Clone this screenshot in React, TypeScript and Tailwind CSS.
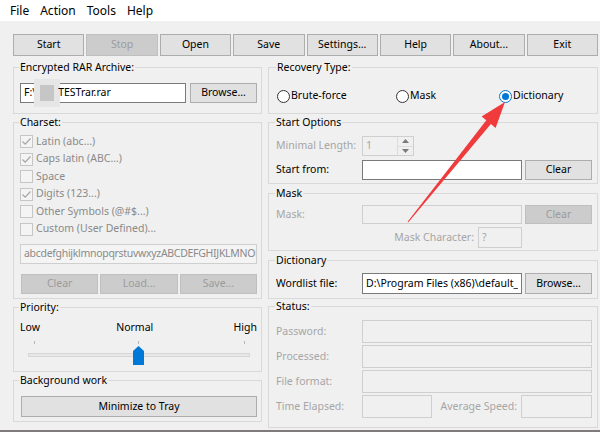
import React from 'react';

const btn = 'flex items-center justify-center border border-[#adadad] bg-[#e1e1e1] text-black';
const btnOff = 'flex items-center justify-center border border-[#bfbfbf] bg-[#cccccc] text-[#9b9b9b]';
const field = 'flex items-center border border-[#7a7a7a] bg-white px-[3px] text-black overflow-hidden whitespace-nowrap';
const fieldOff = 'flex items-center border border-[#cfcfcf] bg-[#f0f0f0] px-[3px] text-[#a6a6a6] overflow-hidden whitespace-nowrap';
const group = 'border border-[#d9d9d9] m-0 min-w-0';
const legend = 'leading-[14px] text-black px-[1px] -ml-[1px]';

function Check({ on, label }: { on?: boolean; label: string }) {
  return (
    <div className="flex h-[17.5px] items-center gap-[3px] text-[#8a8a8a]">
      <span className="flex h-[13px] w-[13px] items-center justify-center border border-[#c6c6c6] bg-[#f4f4f4]">
        {on && (
          <svg width="11" height="11" viewBox="0 0 11 11">
            <path d="M1.5 5.5 L4.2 8.2 L9.5 2.5" fill="none" stroke="#a5a5a5" strokeWidth="1.2" />
          </svg>
        )}
      </span>
      <span>{label}</span>
    </div>
  );
}

function Radio({ on, label }: { on?: boolean; label: string }) {
  return (
    <div className="flex items-center gap-[1px]">
      <span
        className={
          'flex h-[13px] w-[13px] items-center justify-center rounded-full border bg-white ' +
          (on ? 'border-[#0078d7]' : 'border-[#333333]')
        }
      >
        {on && <span className="h-[7px] w-[7px] rounded-full bg-[#0078d7]" />}
      </span>
      <span>{label}</span>
    </div>
  );
}

export default function App() {
  return (
    <div className="relative flex h-[432px] w-[600px] flex-col overflow-hidden bg-[#f0f0f0] font-['Noto_Sans',sans-serif] text-[10.5px] text-black">
      {/* Menu */}
      <div className="flex h-[21px] items-center gap-[11px] bg-white pl-[10px] text-[12px]">
        <span>File</span>
        <span>Action</span>
        <span>Tools</span>
        <span>Help</span>
      </div>

      {/* Toolbar */}
      <div className="mt-[13px] flex h-[22px] gap-[2px] pl-[13px] pr-[2px]">
        <div className={btn + ' flex-1'}>Start</div>
        <div className={btnOff + ' flex-1'}>Stop</div>
        <div className={btn + ' flex-1'}>Open</div>
        <div className={btn + ' flex-1'}>Save</div>
        <div className={btn + ' flex-1'}>Settings...</div>
        <div className={btn + ' flex-1'}>Help</div>
        <div className={btn + ' flex-1'}>About...</div>
        <div className={btn + ' flex-1'}>Exit</div>
      </div>

      <div className="flex gap-[6px] pl-[13px] pr-[2px]">
        {/* Left column */}
        <div className="flex w-[249px] flex-col">
          <fieldset className={group + ' mt-[4px] h-[54px] px-[6px] pr-[4px] pt-[9px]'}>
            <legend className={legend}>Encrypted RAR Archive:</legend>
            <div className="flex gap-[4px]">
              <div className={field + ' h-[20px] w-[166px] overflow-visible'}>
                <span>F:\</span>
                <span className="mx-[4px] h-[16px] w-[14px] bg-[#c6c6c6] shadow-[0_0_0_6px_#e6e6e6]" />
                <span>TESTrar.rar</span>
              </div>
              <div className={btn + ' h-[20px] flex-1'}>Browse...</div>
            </div>
          </fieldset>

          <fieldset className={group + ' mt-[1px] h-[184px] px-[6px] pr-[4px] pt-[4px]'}>
            <legend className={legend}>Charset:</legend>
            <Check on label="Latin (abc...)" />
            <Check on label="Caps latin (ABC...)" />
            <Check label="Space" />
            <Check on label="Digits (123...)" />
            <Check label="Other Symbols (@#$...)" />
            <Check label="Custom (User Defined)..." />
            <div className="mt-[6px] flex h-[20px] items-center overflow-hidden whitespace-nowrap border border-[#cfcfcf] bg-[#f4f4f4] px-[3px] tracking-[-0.3px] text-[#8a8a8a]">
              abcdefghijklmnopqrstuvwxyzABCDEFGHIJKLMNOPQRSTUVWXYZ
            </div>
            <div className="mt-[10px] flex gap-[2px] pl-[1px]">
              <div className={btnOff + ' h-[20px] flex-1'}>Clear</div>
              <div className={btnOff + ' h-[20px] flex-1'}>Load...</div>
              <div className={btnOff + ' h-[20px] flex-1'}>Save...</div>
            </div>
          </fieldset>

          <fieldset className={group + ' mt-[1px] h-[72px] px-[6px] pr-[4px] pt-[6px]'}>
            <legend className={legend}>Priority:</legend>
            <div className="flex h-[14px] items-center justify-between leading-[14px]">
              <span>Low</span>
              <span className="-ml-[4px]">Normal</span>
              <span>High</span>
            </div>
            <div className="relative h-[32px] pt-[19px]">
              <span className="absolute left-[14px] top-[7px] h-[3px] w-px bg-[#b5b5b5]" />
              <span className="absolute left-[118px] top-[7px] h-[3px] w-px bg-[#b5b5b5]" />
              <span className="absolute left-[224px] top-[7px] h-[3px] w-px bg-[#b5b5b5]" />
              <div className="ml-[8px] mr-[7px] h-[4px] border border-[#d6d6d6] bg-[#e7e7e7]" />
              <svg className="absolute left-[113px] top-[12px]" width="11" height="19" viewBox="0 0 11 19">
                <polygon points="0,5 5.5,0 11,5 11,19 0,19" fill="#0078d7" />
              </svg>
            </div>
          </fieldset>

          <fieldset className={group + ' mt-[1px] h-[49px] px-[6px] pr-[4px] pt-[9px]'}>
            <legend className={legend}>Background work</legend>
            <div className={btn + ' ml-[1px] h-[21px]'}>Minimize to Tray</div>
          </fieldset>
        </div>

        {/* Right column */}
        <div className="flex w-[330px] flex-col">
          <fieldset className={group + ' mt-[4px] h-[54px] pl-[8px] pt-[15px]'}>
            <legend className={legend}>Recovery Type:</legend>
            <div className="flex h-[14px] items-center">
              <div className="w-[119px]">
                <Radio label="Brute-force" />
              </div>
              <div className="w-[103px]">
                <Radio label="Mask" />
              </div>
              <Radio on label="Dictionary" />
            </div>
          </fieldset>

          <fieldset className={group + ' mt-[1px] h-[69px] pl-[7px] pr-[5px] pt-[7px]'}>
            <legend className={legend}>Start Options</legend>
            <div className="flex h-[20px] items-center">
              <span className="w-[86px] text-[#a6a6a6]">Minimal Length:</span>
              <div className="flex h-[20px] w-[52px] border border-[#cfcfcf] bg-[#f0f0f0]">
                <span className="flex flex-1 items-center px-[3px] text-[#a6a6a6]">1</span>
                <div className="flex w-[16px] flex-col border-l border-[#dcdcdc]">
                  <span className="flex flex-1 items-center justify-center border-b border-[#dcdcdc]">
                    <svg width="7" height="4" viewBox="0 0 7 4">
                      <polygon points="0,4 3.5,0 7,4" fill="#7a7a7a" />
                    </svg>
                  </span>
                  <span className="flex flex-1 items-center justify-center">
                    <svg width="7" height="4" viewBox="0 0 7 4">
                      <polygon points="0,0 3.5,4 7,0" fill="#7a7a7a" />
                    </svg>
                  </span>
                </div>
              </div>
            </div>
            <div className="mt-[4px] flex h-[20px] items-center">
              <span className="w-[86px]">Start from:</span>
              <div className={field + ' h-[20px] w-[160px]'} />
              <div className={btn + ' ml-[3px] h-[20px] flex-1'}>Clear</div>
            </div>
          </fieldset>

          <fieldset className={group + ' mt-[2px] h-[65px] pl-[7px] pr-[5px] pt-[5px]'}>
            <legend className={legend}>Mask</legend>
            <div className="flex h-[19px] items-center">
              <span className="w-[86px] text-[#a6a6a6]">Mask:</span>
              <div className={fieldOff + ' h-[19px] w-[160px]'} />
              <div className={btnOff + ' ml-[3px] h-[19px] flex-1'}>Clear</div>
            </div>
            <div className="mt-[3px] flex h-[21px] items-center">
              <span className="w-[202px] pr-[4px] text-right text-[#a6a6a6]">Mask Character:</span>
              <div className={fieldOff + ' h-[21px] w-[44px]'}>?</div>
            </div>
          </fieldset>

          <fieldset className={group + ' mt-[2px] h-[46px] pl-[7px] pr-[5px] pt-[6px]'}>
            <legend className={legend}>Dictionary</legend>
            <div className="flex h-[21px] items-center">
              <span className="w-[86px]">Wordlist file:</span>
              <div className={field + ' h-[21px] w-[160px]'}>
                <span className="w-[152px] overflow-hidden">D:\Program Files (x86)\default_english.dic</span>
              </div>
              <div className={btn + ' ml-[3px] h-[21px] flex-1'}>Browse...</div>
            </div>
          </fieldset>

          <fieldset className={group + ' h-[129px] pl-[7px] pr-[5px] pt-[7px]'}>
            <legend className={legend}>Status:</legend>
            <div className="flex flex-col gap-[2px] text-[#a6a6a6]">
              <div className="flex h-[23px] items-center">
                <span className="w-[86px]">Password:</span>
                <div className={fieldOff + ' h-[23px] flex-1'} />
              </div>
              <div className="flex h-[23px] items-center">
                <span className="w-[86px]">Processed:</span>
                <div className={fieldOff + ' h-[23px] flex-1'} />
              </div>
              <div className="flex h-[23px] items-center">
                <span className="w-[86px]">File format:</span>
                <div className={fieldOff + ' h-[23px] flex-1'} />
              </div>
              <div className="flex h-[23px] items-center">
                <span className="w-[86px]">Time Elapsed:</span>
                <div className={fieldOff + ' h-[23px] w-[70px]'} />
                <span className="flex-1 pr-[4px] text-right">Average Speed:</span>
                <div className={fieldOff + ' h-[23px] w-[71px]'} />
              </div>
            </div>
          </fieldset>
        </div>
      </div>

      <div className="mt-auto h-[2px] bg-[#7f7b7b]" />

      {/* Red annotation arrow */}
      <svg className="pointer-events-none absolute left-0 top-0" width="600" height="432" viewBox="0 0 600 432">
        <polygon
          points="407.6,221.7 486.3,120.3 481.6,116.5 505,102 495.6,127.9 490.9,124.1 408.4,222.3"
          fill="#ef3b3b"
        />
      </svg>
    </div>
  );
}
